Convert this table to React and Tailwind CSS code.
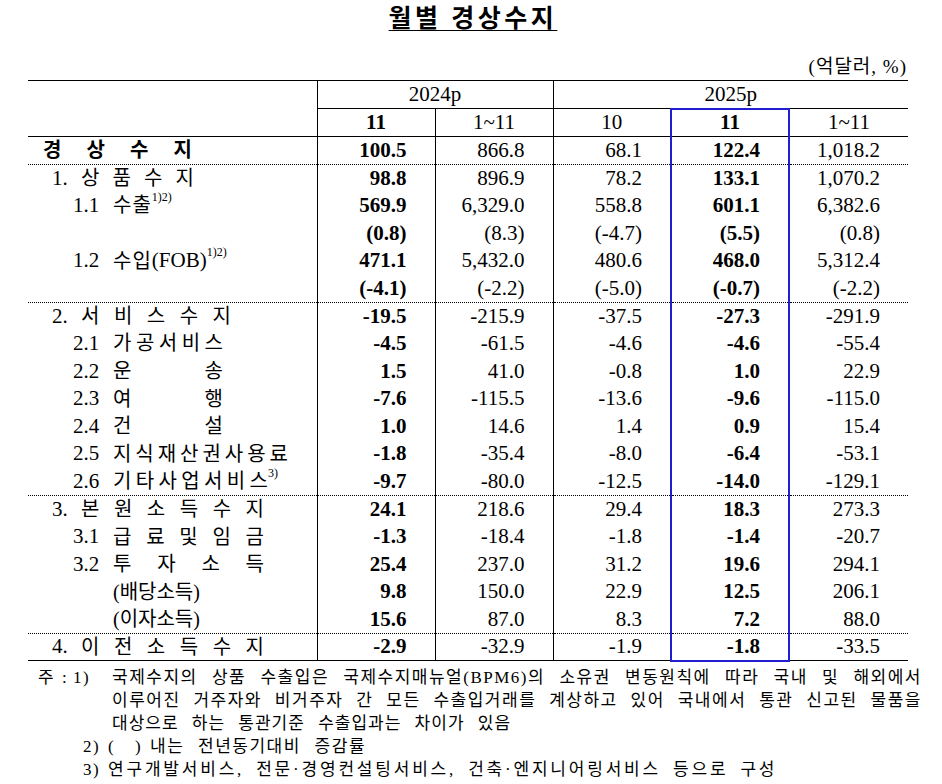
import React from "react";

const BLUE = "border-l-2 border-r-2 border-l-[#1f1fd0] border-r-[#1f1fd0]";

// spread a label's syllables across a fixed width
function Spread({ text, w, className = "" }) {
  return (
    <span className={`flex justify-between ${w} ${className}`}>
      {[...text].map((c, i) => (
        <span key={i}>{c}</span>
      ))}
    </span>
  );
}

function Sup({ children }) {
  return <sup className="text-[12px] top-[-0.7em]">{children}</sup>;
}

function Main({ n, text, w }) {
  return (
    <div className="flex items-center pl-[24px]">
      <span className="w-[29px] text-[21px]">{n}</span>
      <Spread text={text} w={w} />
    </div>
  );
}

function Sub({ n, children }) {
  return (
    <div className="flex items-center pl-[45px]">
      <span className="w-[40px] text-[21px]">{n}</span>
      {children}
    </div>
  );
}

const rows = [
  {
    label: (
      <div className="flex pl-[15px] font-bold">
        <Spread text="경상수지" w="w-[149px]" />
      </div>
    ),
    v: ["100.5", "866.8", "68.1", "122.4", "1,018.2"],
  },
  { label: <Main n="1." text="상품수지" w="w-[113px]" />, v: ["98.8", "896.9", "78.2", "133.1", "1,070.2"], top: "dotted" },
  {
    label: (
      <Sub n="1.1">
        <span className="tracking-[1px]">수출</span>
        <Sup>1)2)</Sup>
      </Sub>
    ),
    v: ["569.9", "6,329.0", "558.8", "601.1", "6,382.6"],
  },
  { label: null, v: ["(0.8)", "(8.3)", "(-4.7)", "(5.5)", "(0.8)"] },
  {
    label: (
      <Sub n="1.2">
        <span className="tracking-[1px]">수입</span>
        <span className="text-[21px]">(FOB)</span>
        <Sup>1)2)</Sup>
      </Sub>
    ),
    v: ["471.1", "5,432.0", "480.6", "468.0", "5,312.4"],
  },
  { label: null, v: ["(-4.1)", "(-2.2)", "(-5.0)", "(-0.7)", "(-2.2)"] },
  { label: <Main n="2." text="서비스수지" w="w-[150px]" />, v: ["-19.5", "-215.9", "-37.5", "-27.3", "-291.9"], top: "dotted" },
  { label: <Sub n="2.1"><Spread text="가공서비스" w="w-[110px]" /></Sub>, v: ["-4.5", "-61.5", "-4.6", "-4.6", "-55.4"] },
  { label: <Sub n="2.2"><Spread text="운송" w="w-[110px]" /></Sub>, v: ["1.5", "41.0", "-0.8", "1.0", "22.9"] },
  { label: <Sub n="2.3"><Spread text="여행" w="w-[110px]" /></Sub>, v: ["-7.6", "-115.5", "-13.6", "-9.6", "-115.0"] },
  { label: <Sub n="2.4"><Spread text="건설" w="w-[110px]" /></Sub>, v: ["1.0", "14.6", "1.4", "0.9", "15.4"] },
  { label: <Sub n="2.5"><Spread text="지식재산권사용료" w="w-[175px]" /></Sub>, v: ["-1.8", "-35.4", "-8.0", "-6.4", "-53.1"] },
  {
    label: (
      <Sub n="2.6">
        <Spread text="기타사업서비스" w="w-[155px]" />
        <Sup>3)</Sup>
      </Sub>
    ),
    v: ["-9.7", "-80.0", "-12.5", "-14.0", "-129.1"],
  },
  { label: <Main n="3." text="본원소득수지" w="w-[183px]" />, v: ["24.1", "218.6", "29.4", "18.3", "273.3"], top: "dotted" },
  { label: <Sub n="3.1"><Spread text="급료및임금" w="w-[151px]" /></Sub>, v: ["-1.3", "-18.4", "-1.8", "-1.4", "-20.7"] },
  { label: <Sub n="3.2"><Spread text="투자소득" w="w-[151px]" /></Sub>, v: ["25.4", "237.0", "31.2", "19.6", "294.1"] },
  { label: <div className="pl-[85px]">(배당소득)</div>, v: ["9.8", "150.0", "22.9", "12.5", "206.1"] },
  { label: <div className="pl-[85px]">(이자소득)</div>, v: ["15.6", "87.0", "8.3", "7.2", "88.0"] },
  { label: <Main n="4." text="이전소득수지" w="w-[183px]" />, v: ["-2.9", "-32.9", "-1.9", "-1.8", "-33.5"], top: "dotted", last: true },
];

export default function App() {
  return (
    <div className="w-[942px] min-h-[784px] bg-white text-black font-['Liberation_Serif','Noto_Sans_CJK_KR',serif]">
      {/* title */}
      <div className="pt-[3px] pl-[4px] text-center">
        <span className="text-[25px] leading-[32px] font-bold tracking-[3.5px] underline underline-offset-[3px] decoration-1">
          월별 경상수지
        </span>
      </div>

      <div className="mt-[20px] pr-[35px] text-right text-[19px] leading-[24px] tracking-[1px]">(억달러, %)</div>

      <table className="mt-[1px] ml-[28px] w-[880px] table-fixed border-collapse">
        <colgroup>
          <col className="w-[289px]" />
          <col className="w-[118px]" />
          <col className="w-[118px]" />
          <col className="w-[118px]" />
          <col className="w-[118px]" />
          <col className="w-[119px]" />
        </colgroup>
        <thead className="text-[21px]">
          <tr className="h-[28px]">
            <th rowSpan={2} className="border-t border-b border-r border-black" />
            <th colSpan={2} className="border-t border-b border-l border-black font-normal leading-none">
              2024p
            </th>
            <th colSpan={3} className="border-t border-b border-l border-black font-normal leading-none">
              2025p
            </th>
          </tr>
          <tr className="h-[28px]">
            <th className="border-l border-b border-black font-bold leading-none">11</th>
            <th className="border-l border-b border-black font-normal leading-none">1~11</th>
            <th className="border-l border-b border-black font-normal leading-none">10</th>
            <th className={`border-t-2 border-t-[#1f1fd0] border-b border-b-black font-bold leading-none ${BLUE}`}>11</th>
            <th className="border-l border-b border-black font-normal leading-none">1~11</th>
          </tr>
        </thead>
        <tbody>
          {rows.map((r, i) => {
            const topCls =
              r.top === "dotted" ? "border-t border-t-black [border-top-style:dotted]" : "";
            const botCls = r.last ? "border-b border-b-black" : "";
            return (
              <tr key={i} className="h-[27.6px]">
                <td className={`p-0 text-[20px] leading-none ${topCls} ${botCls}`}>{r.label}</td>
                {r.v.map((val, j) => (
                  <td
                    key={j}
                    className={`p-0 pr-[28px] text-right text-[21px] leading-none ${topCls} ${
                      j === 3
                        ? `${BLUE} font-bold ${r.last ? "border-b-2 border-b-[#1f1fd0]" : ""}`
                        : `border-l border-l-black ${botCls}`
                    } ${j === 0 ? "font-bold" : ""}`}
                  >
                    {val}
                  </td>
                ))}
              </tr>
            );
          })}
        </tbody>
      </table>

      {/* notes */}
      <div className="mt-[4px] text-[17px] leading-[23px] tracking-[1.5px] [word-spacing:6px]">
        <div className="flex pl-[38px] pr-[20px]">
          <span className="w-[24px]">주</span>
          <span className="w-[11px]">:</span>
          <span className="w-[39px]">1)</span>
          <span className="flex-1 text-justify [text-align-last:justify]">
            국제수지의 상품 수출입은 국제수지매뉴얼(BPM6)의 소유권 변동원칙에 따라 국내 및 해외에서
          </span>
        </div>
        <div className="pl-[112px] pr-[20px] text-justify [text-align-last:justify]">
          이루어진 거주자와 비거주자 간 모든 수출입거래를 계상하고 있어 국내에서 통관 신고된 물품을
        </div>
        <div className="pl-[112px] tracking-[1px] [word-spacing:8px]">
          대상으로 하는 통관기준 수출입과는 차이가 있음
        </div>
        <div className="flex pl-[83px]">
          <span className="w-[25px]">2)</span>
          <span className="w-[27px]">(</span>
          <span className="w-[15px]">)</span>
          <span className="[word-spacing:8px]">내는 전년동기대비 증감률</span>
        </div>
        <div className="flex pl-[83px]">
          <span className="w-[25px]">3)</span>
          <span className="tracking-[2.8px] [word-spacing:5px]">
            연구개발서비스, 전문·경영컨설팅서비스, 건축·엔지니어링서비스 등으로 구성
          </span>
        </div>
      </div>
    </div>
  );
}
